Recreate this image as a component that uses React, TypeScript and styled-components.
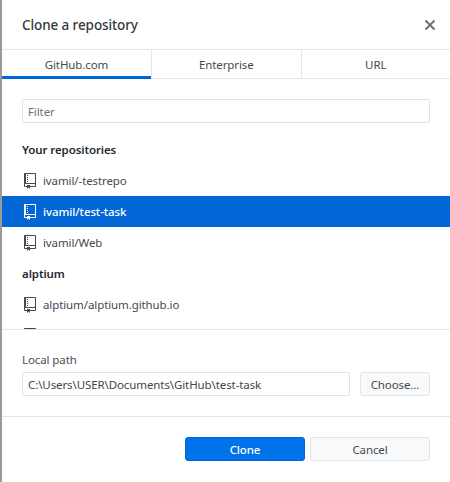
import React from 'react';
import styled, { createGlobalStyle } from 'styled-components';

const GlobalStyle = createGlobalStyle`
    html, body {
        margin: 0;
        padding: 0;
        background: #fff;
    }
    * {
        box-sizing: border-box;
    }
`;

const Dialog = styled.div`
    width: 450px;
    height: 482px;
    overflow: hidden;
    background: #fff;
    border-left: 2px solid #9a9a9a;
    display: flex;
    flex-direction: column;
    font-family: 'Noto Sans', 'Open Sans', sans-serif;
    font-size: 11.5px;
    letter-spacing: -0.1px;
    color: #24292e;
`;

const Header = styled.header`
    height: 49px;
    flex: none;
    display: flex;
    align-items: center;
    justify-content: space-between;
    padding: 0 14px 0 20px;
    h1 {
        margin: 0;
        font-size: 13.5px;
        font-weight: 500;
        color: #33383d;
    }
`;

const CloseButton = styled.button`
    border: 0;
    padding: 0;
    background: none;
    color: #6a737d;
    width: 12px;
    height: 12px;
    display: flex;
`;

const Tabs = styled.nav`
    height: 30px;
    flex: none;
    display: flex;
    border-top: 1px solid #e1e4e8;
    border-bottom: 1px solid #e1e4e8;
`;

const Tab = styled.div<{ $active?: boolean }>`
    flex: ${({ $active }) => ($active ? '0 0 149px' : '1')};
    display: flex;
    align-items: center;
    justify-content: center;
    padding-top: ${({ $active }) => ($active ? '2px' : '0')};
    border-left: ${({ $active }) => ($active ? '0' : '1px solid #e1e4e8')};
    border-bottom: ${({ $active }) => ($active ? '3px solid #0366d6' : '0')};
    height: ${({ $active }) => ($active ? '29px' : '28px')};
    color: #43494f;
`;

const FilterBox = styled.div`
    flex: none;
    padding: 20px 20px 0;
`;

const TextBox = styled.div`
    height: 24px;
    flex: 1;
    display: flex;
    align-items: center;
    padding: 0 5px;
    border: 1px solid #dfe2e5;
    border-radius: 2px;
    color: #40464c;
    white-space: nowrap;
    overflow: hidden;
`;

const Placeholder = styled(TextBox)`
    color: #6a737d;
`;

const RepoList = styled.div`
    height: 207px;
    flex: none;
    overflow: hidden;
    padding-top: 11px;
    border-bottom: 1px solid #e1e4e8;
`;

const GroupTitle = styled.div`
    height: 31px;
    padding-left: 20px;
    display: flex;
    align-items: center;
    font-weight: 600;
    color: #24292e;
`;

const RepoRow = styled.div<{ $selected?: boolean }>`
    height: 31px;
    display: flex;
    align-items: center;
    gap: 7px;
    padding-left: 22px;
    background: ${({ $selected }) => ($selected ? '#0366d6' : 'transparent')};
    color: ${({ $selected }) => ($selected ? '#fff' : '#43494f')};
    font-weight: ${({ $selected }) => ($selected ? 500 : 400)};
`;

const PathSection = styled.section`
    height: 87px;
    flex: none;
    padding: 22px 20px 0;
    border-bottom: 1px solid #e1e4e8;
    label {
        display: block;
        height: 20px;
        line-height: 16px;
        color: #4a5056;
    }
`;

const PathRow = styled.div`
    display: flex;
    gap: 10px;
`;

const Button = styled.button<{ $primary?: boolean; $width: number }>`
    flex: ${({ $width }) => `0 0 ${$width}px`};
    height: 24px;
    padding: 0;
    border-radius: 3px;
    font: inherit;
    letter-spacing: inherit;
    font-weight: ${({ $primary }) => ($primary ? 500 : 400)};
    border: 1px solid ${({ $primary }) => ($primary ? '#0366d6' : '#e1e4e8')};
    background: ${({ $primary }) => ($primary ? '#0073ea' : '#f8f9fa')};
    color: ${({ $primary }) => ($primary ? '#fff' : '#43494f')};
`;

const Footer = styled.footer`
    flex: none;
    display: flex;
    justify-content: flex-end;
    gap: 5px;
    padding: 20px 20px 0;
`;

const RepoIcon = () => (
    <svg width="12" height="16" viewBox="0 0 12 16" fill="currentColor" style={{ flex: 'none' }}>
        <path d="M4 9H3V8h1v1zm0-3H3v1h1V6zm0-2H3v1h1V4zm0-2H3v1h1V2zm8-1v12c0 .55-.45 1-1 1H6v2l-1.5-1.5L3 16v-2H1c-.55 0-1-.45-1-1V1c0-.55.45-1 1-1h10c.55 0 1 .45 1 1zm-1 10H1v2h2v-1h3v1h5v-2zm0-10H2v9h9V1z" />
    </svg>
);

const repos = ['ivamil/-testrepo', 'ivamil/test-task', 'ivamil/Web'];

export default function App() {
    return (
        <Dialog>
            <GlobalStyle />
            <Header>
                <h1>Clone a repository</h1>
                <CloseButton aria-label="Close">
                    <svg width="12" height="12" viewBox="0 0 12 12" stroke="currentColor" strokeWidth="2">
                        <path d="M1.5 1.5l9 9M10.5 1.5l-9 9" />
                    </svg>
                </CloseButton>
            </Header>
            <Tabs>
                <Tab $active>GitHub.com</Tab>
                <Tab>Enterprise</Tab>
                <Tab>URL</Tab>
            </Tabs>
            <FilterBox>
                <PathRow>
                    <Placeholder>Filter</Placeholder>
                </PathRow>
            </FilterBox>
            <RepoList>
                <GroupTitle>Your repositories</GroupTitle>
                {repos.map(name => (
                    <RepoRow key={name} $selected={name === 'ivamil/test-task'}>
                        <RepoIcon />
                        {name}
                    </RepoRow>
                ))}
                <GroupTitle>alptium</GroupTitle>
                <RepoRow>
                    <RepoIcon />
                    alptium/alptium.github.io
                </RepoRow>
                <RepoRow>
                    <RepoIcon />
                </RepoRow>
            </RepoList>
            <PathSection>
                <label>Local path</label>
                <PathRow>
                    <TextBox>C:\Users\USER\Documents\GitHub\test-task</TextBox>
                    <Button $width={70}>Choose...</Button>
                </PathRow>
            </PathSection>
            <Footer>
                <Button $primary $width={120}>Clone</Button>
                <Button $width={120}>Cancel</Button>
            </Footer>
        </Dialog>
    );
}
